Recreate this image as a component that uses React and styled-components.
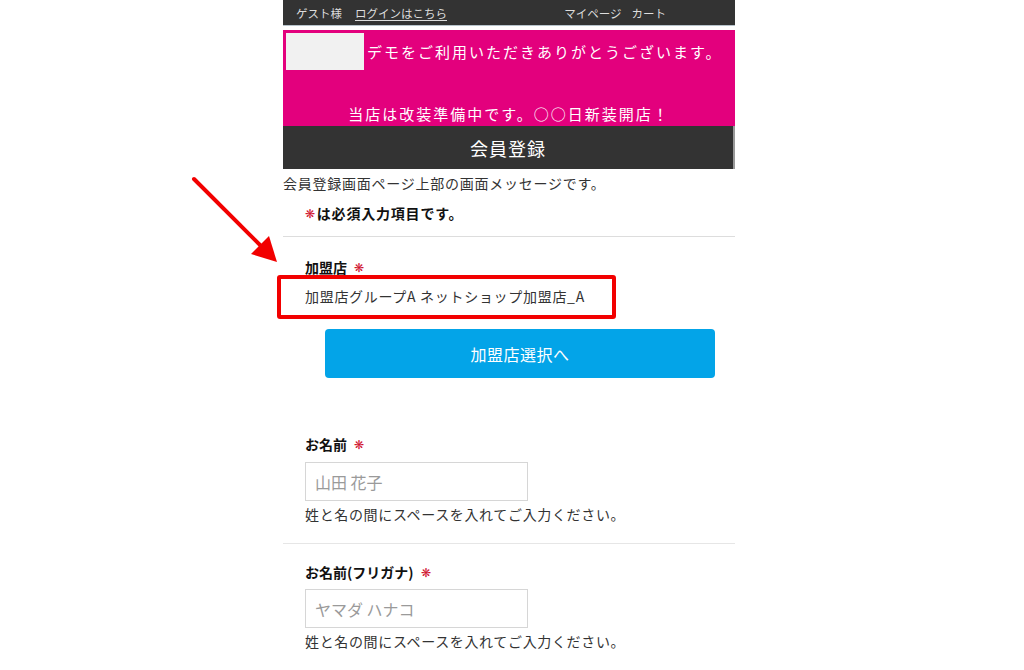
import React from "react";
import styled, { createGlobalStyle } from "styled-components";

const Global = createGlobalStyle`
  html, body { margin: 0; padding: 0; background: #fff; }
  body { font-family: "Noto Sans CJK JP", "Noto Sans", sans-serif; color: #333; }
  * { box-sizing: border-box; }
`;

const Stage = styled.div`
  position: relative;
  width: 1024px;
  height: 670px;
  overflow: hidden;
  padding-left: 283px;
`;

const Column = styled.div`
  width: 452px;
  display: flex;
  flex-direction: column;
`;

const TopBar = styled.div`
  height: 26px;
  background: #333;
  display: flex;
  align-items: center;
  padding: 0 13px;
  font-size: 11.5px;
  color: #ddd;
  border-bottom: 1px solid #b8c4cc;
`;

const TopLeft = styled.div`
  display: flex;
  gap: 13px;
  flex: 1;
`;

const TopRight = styled.div`
  display: flex;
  gap: 10px;
  margin-right: 56px;
`;

const TopLink = styled.span`
  text-decoration: ${(p) => (p.$underline ? "underline" : "none")};
  text-underline-offset: 2px;
`;

const Banner = styled.div`
  margin-top: 4px;
  height: 96px;
  background: #e3007d;
  display: flex;
  flex-direction: column;
  padding: 3px;
`;

const BannerRow = styled.div`
  display: flex;
  align-items: center;
  gap: 3px;
`;

const Blank = styled.div`
  width: 78px;
  height: 37px;
  background: #f1f1f1;
`;

const BannerText = styled.div`
  color: #fff;
  font-size: 15px;
  letter-spacing: ${(p) => p.$ls || "1.5px"};
  text-align: ${(p) => (p.$center ? "center" : "left")};
  margin-top: ${(p) => p.$mt || 0};
`;

const TitleBar = styled.div`
  height: 43px;
  background: #333;
  color: #fff;
  font-size: 18px;
  display: flex;
  align-items: center;
  justify-content: center;
  letter-spacing: 1px;
  border-right: 2px solid #999;
`;

const Message = styled.div`
  font-size: 14px;
  line-height: 22px;
  margin-top: 3px;
  letter-spacing: 0.75px;
`;

const Required = styled.span`
  color: #d0122f;
  font-size: 12px;
  margin-right: 1px;
  font-weight: 400;
  line-height: 1;
`;

const Note = styled.div`
  font-size: 14px;
  font-weight: 700;
  line-height: 20px;
  padding-left: 22px;
  margin-top: 9px;
  padding-bottom: 13px;
  border-bottom: 1px solid #ddd;
  color: #111;
  letter-spacing: 0.8px;
  display: flex;
  align-items: center;
`;

const Section = styled.div`
  padding-left: 22px;
  padding-top: ${(p) => p.$pt || "20px"};
  padding-bottom: ${(p) => p.$pb || "0"};
  border-bottom: ${(p) => (p.$line ? "1px solid #e6e6e6" : "none")};
  display: flex;
  flex-direction: column;
`;

const Label = styled.div`
  font-size: 14px;
  font-weight: 700;
  line-height: 20px;
  color: #111;
  display: flex;
  align-items: center;
  gap: 7px;
`;

const Value = styled.div`
  font-size: 14px;
  line-height: 20px;
  margin-top: 9px;
  letter-spacing: 0.7px;
`;

const BlueButton = styled.button`
  margin-top: 23px;
  margin-left: 20px;
  width: 390px;
  height: 49px;
  border: none;
  border-radius: 4px;
  background: #03a4e8;
  color: #fff;
  font-family: inherit;
  font-size: 16px;
  letter-spacing: 0.5px;
`;

const Input = styled.input`
  margin-top: ${(p) => p.$mt || "8px"};
  width: 223px;
  height: 39px;
  border: 1px solid #d6d6d6;
  padding: 0 9px;
  font-family: inherit;
  font-size: 16px;
  color: #333;
  outline: none;
  &::placeholder { color: #9a9a9a; }
`;

const Hint = styled.div`
  font-size: 14px;
  line-height: 20px;
  margin-top: 3px;
  letter-spacing: 0.65px;
`;

const Highlight = styled.div`
  position: absolute;
  left: 277px;
  top: 275px;
  width: 339px;
  height: 44px;
  border: 4px solid #f20000;
  border-radius: 3px;
`;

const Arrow = styled.svg`
  position: absolute;
  left: 185px;
  top: 170px;
`;

const Star = () => <Required>❋</Required>;

export default function App() {
  return (
    <>
      <Global />
      <Stage>
        <Column>
          <TopBar>
            <TopLeft>
              <TopLink>ゲスト様</TopLink>
              <TopLink $underline>ログインはこちら</TopLink>
            </TopLeft>
            <TopRight>
              <TopLink>マイページ</TopLink>
              <TopLink>カート</TopLink>
            </TopRight>
          </TopBar>
          <Banner>
            <BannerRow>
              <Blank />
              <BannerText $ls="2px">デモをご利用いただきありがとうございます。</BannerText>
            </BannerRow>
            <BannerText $center $mt="33px" $ls="2px">当店は改装準備中です。○○日新装開店！</BannerText>
          </Banner>
          <TitleBar>会員登録</TitleBar>
          <Message>会員登録画面ページ上部の画面メッセージです。</Message>
          <Note><Star />は必須入力項目です。</Note>
          <Section>
            <Label>加盟店 <Star /></Label>
            <Value>加盟店グループA ネットショップ加盟店_A</Value>
            <BlueButton>加盟店選択へ</BlueButton>
          </Section>
          <Section $pt="56px" $pb="19px" $line>
            <Label>お名前 <Star /></Label>
            <Input placeholder="山田 花子" />
            <Hint>姓と名の間にスペースを入れてご入力ください。</Hint>
          </Section>
          <Section $pt="18px" $pb="20px" $line>
            <Label>お名前(フリガナ) <Star /></Label>
            <Input $mt="7px" placeholder="ヤマダ ハナコ" />
            <Hint>姓と名の間にスペースを入れてご入力ください。</Hint>
          </Section>
        </Column>
        <Highlight />
        <Arrow width="100" height="100" viewBox="0 0 100 100">
          <line x1="9" y1="9" x2="78" y2="78" stroke="#f20000" strokeWidth="4" strokeLinecap="round" />
          <polygon points="92,92 66,84 84,66" fill="#f20000" />
        </Arrow>
      </Stage>
    </>
  );
}
